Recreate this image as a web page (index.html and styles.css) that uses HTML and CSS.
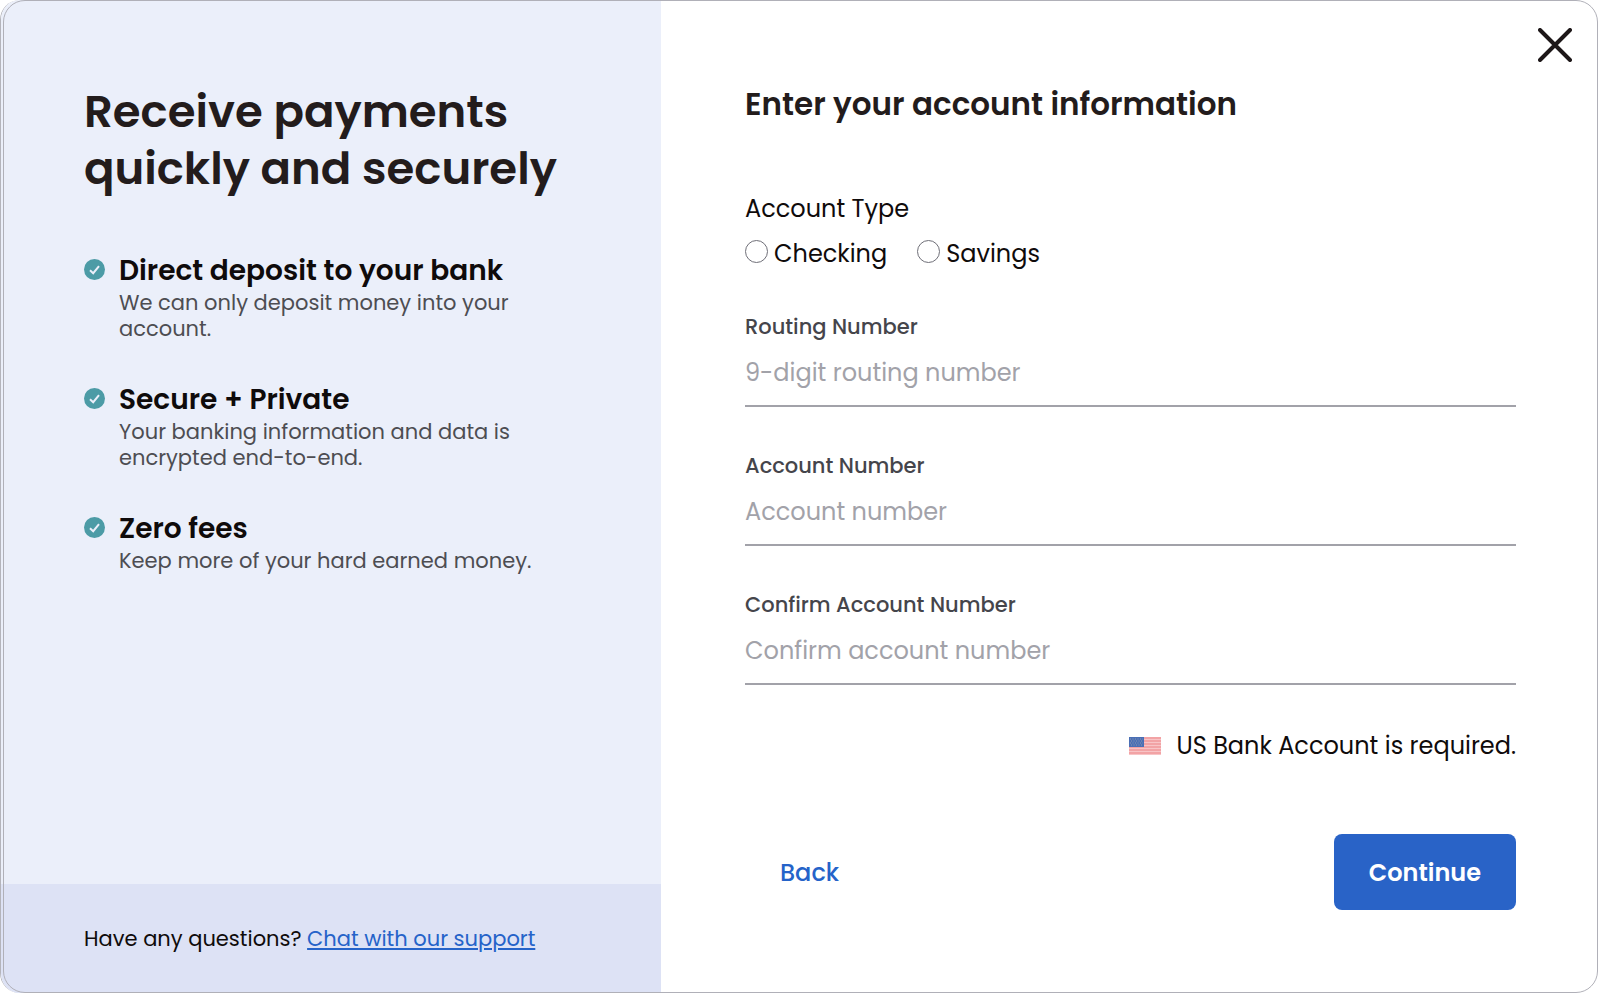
FILE: index.html
```html
<!DOCTYPE html>
<html lang="en">
<head>
  <meta charset="utf-8" />
  <title>Enter your account information</title>
  <meta name="viewport" content="width=device-width, initial-scale=1.0" />
  <link rel="stylesheet" href="styles.css">
</head>

<body>
  <div class="modal">
    <aside class="intro">
      <div class="intro-body">
        <h1>Receive payments quickly and securely</h1>
        <ul class="features">
          <li>
            <svg class="check" viewBox="0 0 21 21" aria-hidden="true"><circle cx="10.5" cy="10.5" r="10.5"/><path d="M6 11.2l3.2 3L15 7.2"/></svg>
            <div>
              <h2>Direct deposit to your bank</h2>
              <p>We can only deposit money into your account.</p>
            </div>
          </li>
          <li>
            <svg class="check" viewBox="0 0 21 21" aria-hidden="true"><circle cx="10.5" cy="10.5" r="10.5"/><path d="M6 11.2l3.2 3L15 7.2"/></svg>
            <div>
              <h2>Secure + Private</h2>
              <p>Your banking information and data is encrypted end-to-end.</p>
            </div>
          </li>
          <li>
            <svg class="check" viewBox="0 0 21 21" aria-hidden="true"><circle cx="10.5" cy="10.5" r="10.5"/><path d="M6 11.2l3.2 3L15 7.2"/></svg>
            <div>
              <h2>Zero fees</h2>
              <p>Keep more of your hard earned money.</p>
            </div>
          </li>
        </ul>
      </div>
      <footer>Have any questions? <a href="#support">Chat with our support</a></footer>
    </aside>

    <main>
      <button class="close" type="button" aria-label="Close">
        <svg viewBox="0 0 34 34" aria-hidden="true"><path d="M2 2l30 30M32 2L2 32"/></svg>
      </button>

      <form>
        <h2 class="form-title">Enter your account information</h2>

        <fieldset>
          <legend>Account Type</legend>
          <div class="options">
            <label><input type="radio" name="type" value="checking"> Checking</label>
            <label><input type="radio" name="type" value="savings"> Savings</label>
          </div>
        </fieldset>

        <div class="field">
          <label for="routing">Routing Number</label>
          <input type="text" id="routing" placeholder="9-digit routing number">
        </div>
        <div class="field">
          <label for="account">Account Number</label>
          <input type="text" id="account" placeholder="Account number">
        </div>
        <div class="field">
          <label for="confirm">Confirm Account Number</label>
          <input type="text" id="confirm" placeholder="Confirm account number">
        </div>

        <p class="note">
          <svg class="flag" viewBox="0 0 32 18" aria-hidden="true">
            <rect width="32" height="18" fill="#f8c4c6"/>
            <path d="M0 1h32M0 4h32M0 7h32M0 10h32M0 13h32M0 16h32" stroke="#f0989b" stroke-width="1.4"/>
            <rect width="15" height="10" fill="#4a6fb5"/>
            <path d="M1 2h13M2 4h12M1 6h13M2 8h12" stroke="#8d99b0" stroke-width="1" stroke-dasharray="1 1.5"/>
          </svg>
          US Bank Account is required.
        </p>

        <div class="actions">
          <button class="back" type="button">Back</button>
          <button class="continue" type="submit">Continue</button>
        </div>
      </form>
    </main>
  </div>
</body>
</html>
```

FILE: styles.css
```css
* { box-sizing: border-box; }

body {
  margin: 0;
  font-family: Poppins, Inter, "Liberation Sans", sans-serif;
  color: #0f0b0b;
  background: #fff;
}

h1, h2, p, ul, fieldset, legend {
  margin: 0;
  padding: 0;
}

.modal {
  position: relative;
  display: flex;
  min-height: 100vh;
  border-left: 1px solid #b4b4bb;
  border-radius: 20px;
  overflow: hidden;
}

/* thin frame just inside the card edge */
.modal::after {
  content: "";
  position: absolute;
  inset: 0 2px 0 2px;
  border: 1px solid #b0b0b8;
  border-radius: 22px;
  pointer-events: none;
}

.intro {
  flex: 0 0 660px;
  display: flex;
  flex-direction: column;
  background: #ebeffa;
}

.intro-body {
  flex: 1;
  padding: 83px 83px 40px;
}

h1 {
  font-size: 45px;
  line-height: 57px;
  font-weight: 600;
  color: #231c1c;
}

.features {
  list-style: none;
  margin-top: 54px;
  display: flex;
  flex-direction: column;
  gap: 38px;
}

.features li {
  display: flex;
  gap: 14px;
}

.features h2 {
  font-size: 28px;
  line-height: 39px;
  font-weight: 600;
}

.features p {
  font-size: 21px;
  line-height: 26px;
  color: #4d4d52;
}

.check {
  flex: none;
  width: 21px;
  height: 21px;
  margin-top: 8px;
}

.check circle { fill: #4c9ba6; }
.check path {
  fill: none;
  stroke: #ebeffa;
  stroke-width: 2;
}

footer {
  padding: 40px 83px;
  font-size: 21px;
  line-height: 29px;
  background: #dde2f5;
}

footer a { color: #2563c9; }

main {
  position: relative;
  flex: 1;
  padding: 84px 84px 60px;
}

.close {
  position: absolute;
  top: 28px;
  right: 28px;
  padding: 0;
  border: 0;
  background: none;
  cursor: pointer;
}

.close svg {
  display: block;
  width: 34px;
  height: 34px;
  fill: none;
  stroke: #1d1718;
  stroke-width: 4;
  stroke-linecap: round;
}

.form-title {
  font-size: 31px;
  line-height: 40px;
  font-weight: 600;
  color: #231c1c;
}

fieldset {
  margin: 66px 0 40px;
  border: 0;
  font-size: 24px;
  line-height: 38px;
}

.options {
  display: flex;
  gap: 30px;
  margin-top: 7px;
}

.options label {
  display: flex;
  gap: 6px;
}

.options input {
  appearance: none;
  width: 23px;
  height: 23px;
  margin: 5px 0 0;
  border: 1px solid #6f6f78;
  border-radius: 50%;
  background: #fff;
}

.options input:checked { border: 7px solid #2563c9; }

.field + .field {
  margin-top: 45px;
}

.field label {
  display: block;
  font-size: 21px;
  line-height: 28px;
  font-weight: 500;
  color: #45454b;
}

.field input {
  display: block;
  width: 100%;
  height: 66px;
  padding: 0 0 2px;
  border: 0;
  border-bottom: 2px solid #a2a2a9;
  background: none;
  font: inherit;
  font-size: 24px;
}

.field input::placeholder { color: #a2a2a9; }

.note {
  display: flex;
  justify-content: flex-end;
  align-items: center;
  gap: 15px;
  margin-top: 42px;
  font-size: 24px;
  line-height: 38px;
}

.flag {
  width: 32px;
  height: 18px;
}

.actions {
  display: flex;
  justify-content: space-between;
  margin-top: 69px;
}

.actions button {
  height: 76px;
  padding: 0 35px;
  border: 0;
  border-radius: 8px;
  background: none;
  font: inherit;
  font-size: 24px;
  font-weight: 500;
  color: #2563c9;
  cursor: pointer;
}

.actions .continue {
  background: #2963c7;
  color: #fff;
  font-weight: 600;
}
```
